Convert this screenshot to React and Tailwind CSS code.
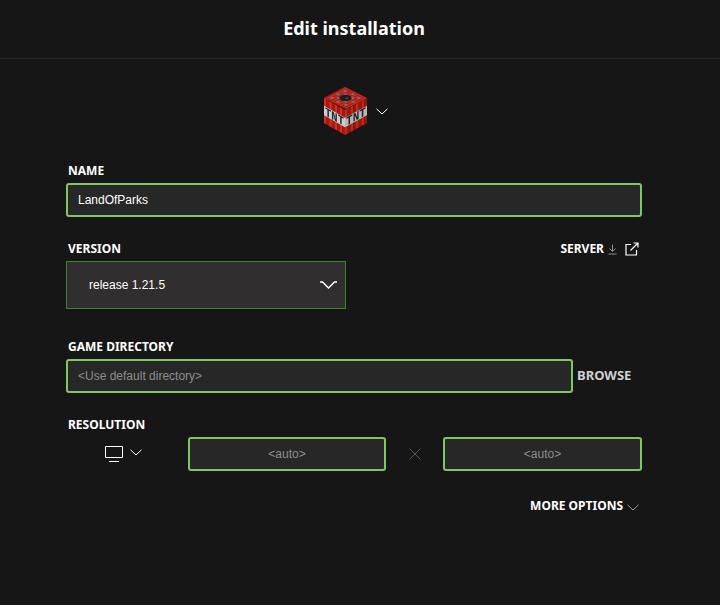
const stripes = [0, 1, 2, 3, 4, 5, 6, 7]
const caps = [
  [3, 3], [8, 2.4], [13, 3],
  [2.4, 8], [13.6, 8],
  [3, 13], [8, 13.6], [13, 13],
  [5.4, 5.4], [10.6, 5.4], [5.4, 10.6], [10.6, 10.6],
]

function TntSide({ matrix, shade }) {
  return (
    <g transform={matrix}>
      {stripes.map((i) => (
        <rect key={i} x={i * 2} y="0" width="2" height="16" fill={i % 2 ? '#a81a10' : '#d92c1c'} />
      ))}
      <rect x="0" y="5" width="16" height="6" fill="#cdcdcd" />
      <text x="8" y="10.6" textAnchor="middle" fontSize="8" fontWeight="700" fontFamily="'Liberation Mono', monospace" fill="#23262e">TNT</text>
      <rect x="0" y="0" width="16" height="16" fill="#000" opacity={shade} />
    </g>
  )
}

function TntBlock() {
  return (
    <svg width="48" height="52" viewBox="0 0 48 52" className="shrink-0 blur-[0.4px]">
      <TntSide matrix="matrix(1.3125 0.75 0 1.5625 3 13)" shade="0" />
      <TntSide matrix="matrix(1.375 -0.75 0 1.5625 24 25)" shade="0.1" />
      <g transform="matrix(1.375 0.6875 -1.3125 0.6875 24 2)">
        <rect x="0" y="0" width="16" height="16" fill="#cf2a1b" />
        {stripes.map((i) => (
          <rect key={i} x={i * 2} y="0" width="1" height="16" fill="#a81c12" />
        ))}
        {caps.map(([x, y]) => (
          <circle key={`${x}-${y}`} cx={x} cy={y} r="1.05" fill="#6d7279" />
        ))}
        <circle cx="8" cy="8" r="3.2" fill="#1b1e26" />
        <circle cx="8.6" cy="7.6" r="1" fill="#3a4050" />
      </g>
    </svg>
  )
}

function Chevron({ className }) {
  return (
    <svg viewBox="0 0 12 7" fill="none" stroke="currentColor" strokeWidth="1" className={className}>
      <path d="M0.5 0.8 6 6 11.5 0.8" />
    </svg>
  )
}

function FieldLabel({ children }) {
  return (
    <div className="h-[25px] pl-[2px] pt-[5px] text-[12px] leading-[16px] font-bold text-white uppercase">
      {children}
    </div>
  )
}

const inputBox = 'h-[34px] rounded-[3px] border-2 border-[#7ec95f] bg-[#272727] flex items-center text-[12px] font-["Liberation_Sans",sans-serif]'

export default function App() {
  return (
    <div className='w-[720px] h-[605px] bg-[#161616] overflow-hidden font-["Noto_Sans",sans-serif]'>
      {/* Header */}
      <div className="h-[59px] border-b border-[#242424] flex items-center justify-center pb-[2px] pr-[12px]">
        <h1 className="text-[18px] font-bold text-white">Edit installation</h1>
      </div>

      {/* Icon picker */}
      <div className="h-[99px] pl-[321px] pt-[26px] flex items-start text-white">
        <TntBlock />
        <Chevron className="w-[12px] h-[7px] ml-[7px] mt-[23px]" />
      </div>

      <div className="pl-[66px] pr-[78px]">
        <FieldLabel>Name</FieldLabel>
        <div className={`${inputBox} px-[10px] text-white`}>LandOfParks</div>

        <div className="mt-[19px] flex items-start justify-between">
          <FieldLabel>Version</FieldLabel>
          <div className="h-[25px] flex items-center gap-[4px] pr-[3px] text-white">
            <span className="text-[12px] font-bold">SERVER</span>
            <svg viewBox="0 0 9 11" fill="none" stroke="#8f8f8f" strokeWidth="1" className="w-[9px] h-[11px] mt-[1px]">
              <path d="M4.5 0.5V7M1.5 4.5 4.5 7.5 7.5 4.5M0.5 10H8.5" />
            </svg>
            <svg viewBox="0 0 14 14" fill="none" stroke="currentColor" strokeWidth="1.2" className="w-[14px] h-[14px] ml-[4px]">
              <path d="M6 2.5H1V13H11.5V8M5.5 8.5 13 1M8.5 1H13V5.5" />
            </svg>
          </div>
        </div>
        <div className='w-[280px] h-[48px] border border-[#3c8527] bg-[#302e2e] flex items-center justify-between pl-[22px] pr-[8px] text-[12px] text-white font-["Liberation_Sans",sans-serif]'>
          <span>release 1.21.5</span>
          <svg viewBox="0 0 17 8" fill="none" stroke="currentColor" strokeWidth="1.4" className="w-[17px] h-[8px] mb-[1px]">
            <path d="M0 1H2.5L8.5 7 14.5 1H17" />
          </svg>
        </div>

        <div className="mt-[25px]">
          <FieldLabel>Game directory</FieldLabel>
        </div>
        <div className="flex items-center">
          <div className={`${inputBox} w-[507px] px-[10px] text-[#8d8d8d]`}>&lt;Use default directory&gt;</div>
          <span className="ml-[4px] text-[13px] font-bold text-[#d0d0d0]">BROWSE</span>
        </div>

        <div className="mt-[19px]">
          <FieldLabel>Resolution</FieldLabel>
        </div>
        <div className="flex items-center text-white">
          <div className="w-[122px] pl-[39px] flex items-center gap-[7px]">
            <svg viewBox="0 0 18 16" fill="none" stroke="currentColor" className="w-[18px] h-[16px]">
              <path d="M0.5 0.5H17.5V11.5H0.5ZM4 15.5H14" />
            </svg>
            <Chevron className="w-[12px] h-[7px] mb-[3px]" />
          </div>
          <div className={`${inputBox} w-[198px] justify-center text-[#8d8d8d]`}>&lt;auto&gt;</div>
          <div className="w-[57px] flex justify-center">
            <svg viewBox="0 0 12 12" fill="none" stroke="#555" className="w-[12px] h-[12px]">
              <path d="M0.5 0.5 11.5 11.5M11.5 0.5 0.5 11.5" />
            </svg>
          </div>
          <div className={`${inputBox} w-[199px] justify-center text-[#8d8d8d]`}>&lt;auto&gt;</div>
        </div>

        <div className="mt-[24px] h-[22px] flex items-center justify-end gap-[4px] pr-[3px]">
          <span className="text-[12px] font-bold text-white">MORE OPTIONS</span>
          <Chevron className="w-[12px] h-[7px] mt-[2px] text-[#9a9a9a]" />
        </div>
      </div>
    </div>
  )
}
